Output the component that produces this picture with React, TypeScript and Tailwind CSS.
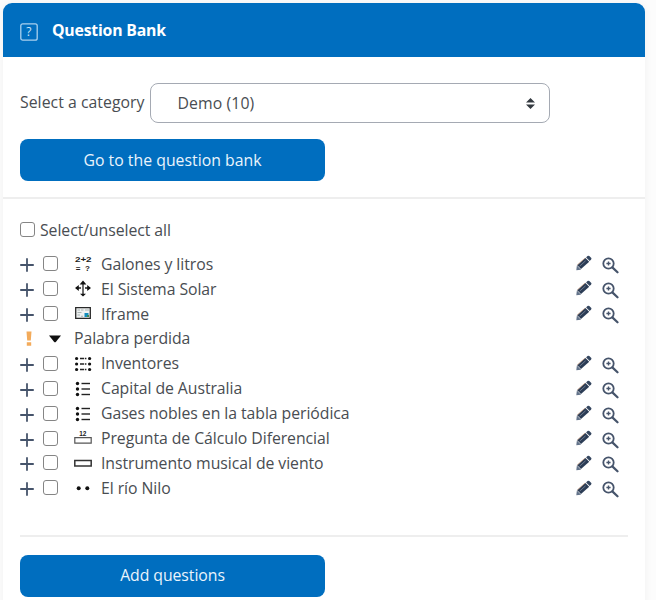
import type { ReactNode } from 'react';

// ---------------------------------------------------------------------------
// Icons
// ---------------------------------------------------------------------------

function PlusIcon() {
  return (
    <svg viewBox="0 0 14 14" className="h-3.5 w-3.5" stroke="#46546b" strokeWidth="1.8" strokeLinecap="round">
      <path d="M7 .9v12.2M.9 7h12.2" />
    </svg>
  );
}

function PencilIcon() {
  return (
    <svg viewBox="0 0 16 16" className="h-4 w-4">
      <path d="M.3 15.3l.6-4.8 4.2 4.2z" fill="#64748b" />
      <path d="M1.2 10.2l8.2-7.2 3.8 3.8-8.2 7.3z" fill="#2b3c55" />
      <path d="M10.1 2.4l1.4-1.3q.9-.8 1.8 0l1.8 1.7q.8.8 0 1.7l-1.4 1.5z" fill="#35465f" />
      <path d="M3.6 11.2l6-5.4" stroke="#7d8999" strokeWidth=".8" />
      <path d="M1.2 10l8-7" stroke="#b4825e" strokeWidth=".6" />
    </svg>
  );
}

function ZoomIcon() {
  return (
    <svg viewBox="0 0 17 17" className="h-[17px] w-[17px]" fill="none" stroke="#46546b">
      <circle cx="6.5" cy="6.5" r="5.2" strokeWidth="1.8" />
      <path d="M10.6 10.6l4.9 4.7" strokeWidth="2.2" strokeLinecap="round" />
      <path d="M6.5 4.4v4.2M4.4 6.5h4.2" strokeWidth="1.4" />
    </svg>
  );
}

function CalculatedIcon() {
  return (
    <svg viewBox="0 0 18 18" className="h-[18px] w-[18px]" fontFamily="Liberation Sans, sans-serif" fontWeight="700" fill="#222">
      <text x="1" y="7.4" fontSize="8" textLength="16.5" lengthAdjust="spacingAndGlyphs">
        2+2
      </text>
      <text x="1.8" y="15.8" fontSize="8">=</text>
      <text x="11" y="16" fontSize="8">?</text>
    </svg>
  );
}

function MoveIcon() {
  return (
    <svg viewBox="0 0 18 18" className="h-[18px] w-[18px]" stroke="#222" fill="#111">
      <path d="M9 3v12M3 8h4M11 8h4" strokeWidth="1.3" />
      <path d="M9 .5L5.6 4.6h6.8zM9 16.5l-3-2.8h6zM1 8l3.8-3v6zM17 8l-3.8-3v6z" stroke="none" />
    </svg>
  );
}

function FrameIcon() {
  return (
    <svg viewBox="0 0 18 18" className="h-[18px] w-[18px]">
      <path d="M1.7 2.7h14.6v10.6H1.7z" fill="#eef1f1" stroke="#292929" strokeWidth="1.3" />
      <path d="M3.5 5h2.5M7 5h2.5M11 5h4M3.5 7.5h4M3.5 10h2.5M7 11.2h2" stroke="#a9b4b4" strokeWidth="1.1" />
      <path d="M10.5 8h4v4h-4z" fill="#148dbe" />
      <path d="M13 10h2v2h-2z" fill="#418d55" />
    </svg>
  );
}

function MatchIcon() {
  return (
    <svg viewBox="0 0 18 18" className="h-[18px] w-[18px]" fill="#111" stroke="#222">
      {[3.5, 9, 14.5].map((y) => (
        <g key={y}>
          <circle cx="2.6" cy={y} r="1.6" stroke="none" />
          <circle cx="15.6" cy={y} r="1.6" stroke="none" />
          <path d={`M6 ${y}h4M10.8 ${y}h1.6`} strokeWidth="1.3" />
        </g>
      ))}
    </svg>
  );
}

function ChoiceIcon() {
  return (
    <svg viewBox="0 0 18 18" className="h-[18px] w-[18px]" fill="#111" stroke="#222">
      {[3.5, 9, 14.5].map((y) => (
        <g key={y}>
          <circle cx="3.5" cy={y} r="1.7" stroke="none" />
          <path d={`M7.5 ${y}h8.5`} strokeWidth="1.4" />
        </g>
      ))}
    </svg>
  );
}

function NumericalIcon() {
  return (
    <svg viewBox="0 0 18 18" className="h-[18px] w-[18px]" fill="none" stroke="#555">
      <path d="M.8 7.6h16.4v5.6H.8z" strokeWidth="1.2" />
      <text x="5.2" y="6.3" fontSize="6.5" fontWeight="700" fontFamily="Liberation Sans, sans-serif" fill="#222" stroke="none">
        12
      </text>
    </svg>
  );
}

function ShortAnswerIcon() {
  return (
    <svg viewBox="0 0 18 18" className="h-[18px] w-[18px]" fill="none" stroke="#333">
      <path d="M.8 5.5h16.4v5.6H.8z" strokeWidth="1.5" />
    </svg>
  );
}

function TrueFalseIcon() {
  return (
    <svg viewBox="0 0 18 18" className="h-[18px] w-[18px]" fill="#111">
      <circle cx="4.7" cy="8.2" r="2" />
      <circle cx="13.3" cy="8.2" r="2" />
    </svg>
  );
}

// ---------------------------------------------------------------------------
// Questions
// ---------------------------------------------------------------------------

interface Question {
  name: string;
  icon?: ReactNode;
}

const QUESTIONS: Question[] = [
  { name: 'Galones y litros', icon: <CalculatedIcon /> },
  { name: 'El Sistema Solar', icon: <MoveIcon /> },
  { name: 'Iframe', icon: <FrameIcon /> },
  { name: 'Palabra perdida' },
  { name: 'Inventores', icon: <MatchIcon /> },
  { name: 'Capital de Australia', icon: <ChoiceIcon /> },
  { name: 'Gases nobles en la tabla periódica', icon: <ChoiceIcon /> },
  { name: 'Pregunta de Cálculo Diferencial', icon: <NumericalIcon /> },
  { name: 'Instrumento musical de viento', icon: <ShortAnswerIcon /> },
  { name: 'El río Nilo', icon: <TrueFalseIcon /> },
];

function Checkbox() {
  return (
    <input
      type="checkbox"
      className="h-[15px] w-[15px] shrink-0 appearance-none rounded-[3px] border border-[#858585] bg-white"
    />
  );
}

function BrokenRow({ name }: { readonly name: string }) {
  return (
    <li className="flex h-[24.95px] items-center">
      <svg viewBox="0 0 6 15" className="ml-1.5 h-[15px] w-1.5" fill="#f3ab5b">
        <path d="M.5 .5h5l-.7 9H1.2zM.8 11.2h4.4v3.5H.8z" />
      </svg>
      <svg viewBox="0 0 12 8" className="mt-0.5 ml-[17px] h-2 w-3" fill="#111">
        <path d="M0 .5h12L7 6.8q-1 1-2 0z" />
      </svg>
      <span className="ml-[13px] pt-0.5">{name}</span>
    </li>
  );
}

function QuestionRow({ question }: { readonly question: Question }) {
  return (
    <li className="flex h-[24.95px] items-center">
      <button className="mt-[3px]" title="Add">
        <PlusIcon />
      </button>
      <span className="ml-[9px] flex">
        <Checkbox />
      </span>
      <span className="mt-0.5 ml-4 flex w-[18px]">{question.icon}</span>
      <span className="ml-[9px] flex-1 pt-0.5 whitespace-nowrap">{question.name}</span>
      <button title="Edit">
        <PencilIcon />
      </button>
      <button className="mt-1 mr-[9px] ml-2.5" title="Preview">
        <ZoomIcon />
      </button>
    </li>
  );
}

export default function App() {
  return (
    <div className="h-[600px] w-[656px] overflow-hidden bg-[#fcfcfc] pt-[3px] pl-[3px] font-['Open_Sans','Noto_Sans',sans-serif] text-[15.8px] tracking-[-0.06px] text-[#494d52]">
      <div className="h-[620px] w-[642px] overflow-hidden rounded-t-[9px] bg-white shadow-[0_0_8px_rgba(0,0,0,0.05)]">
        {/* Header */}
        <header className="flex h-[54px] items-center bg-[#006ebf] pl-[17px] text-white">
          <svg viewBox="0 0 18 18" className="mt-1 h-[18px] w-[18px]" fill="none" stroke="#a9d0ee">
            <rect x=".8" y=".8" width="16.4" height="16.4" rx="2" strokeWidth="1.3" />
            <text x="6.2" y="13.3" fontSize="12" fontFamily="Open Sans, sans-serif" fill="#cde5f7" stroke="none">
              ?
            </text>
          </svg>
          <h1 className="ml-3.5 pt-0.5 font-bold tracking-[-0.2px]">Question Bank</h1>
        </header>

        {/* Category */}
        <section className="h-[142px] border-b-2 border-[#eeeeee] pt-[26px] pl-[17px]">
          <div className="flex items-center">
            <label className="w-[129.5px] whitespace-nowrap pb-px tracking-[0.04px]">Select a category</label>
            <div className="flex h-10 w-[400px] items-center justify-between rounded-lg border border-[#a5aab3] pr-[14px] pl-[27px]">
              <span className="pt-0.5 tracking-[0.1px]">Demo (10)</span>
              <svg viewBox="0 0 9 11" className="h-[11px] w-[9px]" fill="#343a40">
                <path d="M4.5 0L9 4.6H0zM0 6.4h9L4.5 11z" />
              </svg>
            </div>
          </div>
          <button className="mt-4 flex h-[42px] w-[305px] items-center justify-center rounded-lg bg-[#006ebf] pt-0.5 tracking-[0.02px] text-[#eaf4fc]">
            Go to the question bank
          </button>
        </section>

        {/* Question list */}
        <section className="px-[17px] pt-[19px]">
          <div className="flex h-6 items-center gap-[5px]">
            <span className="-mt-0.5 flex">
              <Checkbox />
            </span>
            <label className="pt-0.5">Select/unselect all</label>
          </div>
          <ul className="mt-[9px] h-[284px]">
            {QUESTIONS.map((question) =>
              question.icon ? (
                <QuestionRow key={question.name} question={question} />
              ) : (
                <BrokenRow key={question.name} name={question.name} />
              )
            )}
          </ul>
          <div className="border-t-2 border-[#eeeeee] pt-[18px]">
            <button className="flex h-[42px] w-[305px] items-center justify-center rounded-lg bg-[#006ebf] text-[#eaf4fc]">
              Add questions
            </button>
          </div>
        </section>
      </div>
    </div>
  );
}
